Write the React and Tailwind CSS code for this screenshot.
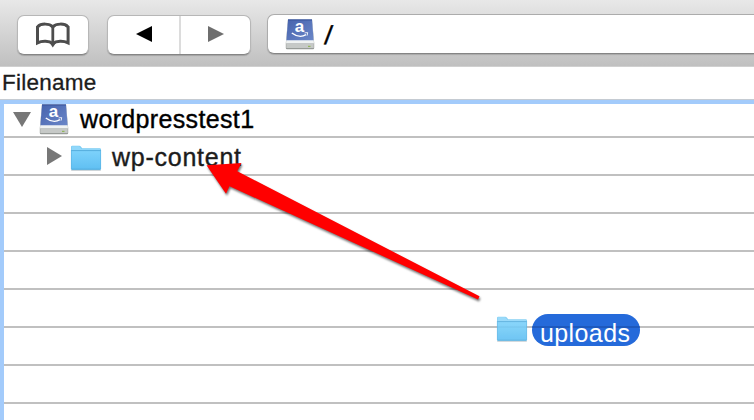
import React from "react";

function BookIcon() {
  return (
    <svg className="h-[26px] w-[36px]" viewBox="0 0 36 26" fill="none" stroke="#4d4d4d">
      <path
        strokeWidth="3"
        d="M17.8 4.9C14.5 1.3 6 1.1 2.5 4.9V20.8C7 18.5 14.2 18.4 17.8 21.7C21.4 18.4 28.6 18.5 33.1 20.8V4.9C29.6 1.1 21.1 1.3 17.8 4.9Z"
      />
      <path strokeWidth="2.8" d="M17.8 4.6V22" />
      <path fill="#4d4d4d" stroke="none" d="M14.6 20.7h6.4l-3.2 4.8z" />
    </svg>
  );
}

function DriveIcon({ id }) {
  return (
    <svg className="h-[31px] w-[30px] shrink-0 overflow-visible" viewBox="0 0 30 31">
      <defs>
        <linearGradient id={id} x1="0" y1="0" x2="1" y2="1">
          <stop offset="0" stopColor="#4562ad" />
          <stop offset="1" stopColor="#6b87c8" />
        </linearGradient>
      </defs>
      <path d="M3 .5H27L29.2 24V29Q29.2 30.3 28 30.3H2Q.8 30.3.8 29V24Z" fill="#979b98" />
      <path d="M3 .5H27L29 24.5H1Z" fill="#f0f3f3" />
      <path d="M3 .5H27L28.6 21.2H1.4Z" fill={`url(#${id})`} />
      <path d="M3 1H27" stroke="#38559c" strokeWidth="1" />
      <path d="M1.3 24.6H28.7V29H1.3Z" fill="#c6c9c7" />
      <path d="M23 27.4h2.5" stroke="#91b65b" strokeWidth="1.2" />
      <text
        x="14.4"
        y="12.9"
        textAnchor="middle"
        fill="#fff"
        className="font-['Liberation_Sans',sans-serif] text-[17px] leading-none font-bold"
      >
        a
      </text>
      <path d="M6.8 14Q14.5 19.8 21 15.7" fill="none" stroke="#fff" strokeWidth="1.4" />
      <path d="M19.6 13.9L22.7 13.6L22.1 16.6" fill="none" stroke="#fff" strokeOpacity=".85" strokeWidth="1" />
    </svg>
  );
}

function FolderIcon({ id }) {
  return (
    <svg className="h-[26px] w-[32px] shrink-0" viewBox="0 0 32 26">
      <defs>
        <linearGradient id={id} x1="0" y1="0" x2="0" y2="1">
          <stop offset="0" stopColor="#7dd2fb" />
          <stop offset="1" stopColor="#5fbff2" />
        </linearGradient>
      </defs>
      <path d="M1.2 25.1H30.8" stroke="#aeb9bf" strokeWidth="1" />
      <path d="M1 24V2Q1 .7 2.3 .7H9.3Q10.2 .7 10.8 1.5L12.2 3.2H29.7Q31 3.2 31 4.5V24Z" fill="#7acbf2" />
      <path d="M1.7 5.3V2Q1.7 1.3 2.5 1.3H9.2L11.6 3.9H30.2V5.3Z" fill="#90d7fa" />
      <path d="M1 5.6H31V23.5Q31 24.7 29.8 24.7H2.2Q1 24.7 1 23.5Z" fill={`url(#${id})`} />
      <path d="M1 5.6H31M1.5 24.2H30.5" stroke="#50aada" strokeWidth=".9" />
      <path d="M1.4 5V24M30.6 5V24" stroke="#5bb5e4" strokeWidth=".7" />
    </svg>
  );
}

export default function App() {
  return (
    <div className="relative flex h-[420px] w-[754px] flex-col overflow-hidden bg-white font-['Liberation_Sans',Arial,sans-serif] text-black">
      <header className="flex h-[67px] shrink-0 items-start border-b border-[#d0d0d0] bg-linear-to-b from-[#e8e8e8] to-[#c0c0c0]">
        <button className="mt-[15px] ml-[17px] flex h-10 w-[72px] items-center justify-center rounded-[7px] border border-[#b7b7b7] border-b-[#858585] bg-white shadow-[0_1px_1px_rgba(0,0,0,0.18)]">
          <BookIcon />
        </button>
        <div className="mt-[15px] ml-[18px] flex h-10 w-[144px] rounded-[7px] border border-[#b7b7b7] border-b-[#858585] bg-white shadow-[0_1px_1px_rgba(0,0,0,0.18)]">
          <button className="flex w-[73px] items-center justify-center border-r-2 border-[#dcdcdc]">
            <svg className="-mt-0.5 ml-px h-4 w-4" viewBox="0 0 16 16">
              <path d="M0 8L16 0V16Z" fill="#000" />
            </svg>
          </button>
          <button className="flex flex-1 items-center justify-center">
            <svg className="-mt-0.5 h-4 w-4" viewBox="0 0 16 16">
              <path d="M16 8L0 0V16Z" fill="#6e6e6e" />
            </svg>
          </button>
        </div>
        <div className="mt-[14px] ml-4 flex h-10 flex-1 items-center rounded-l-[7px] border border-r-0 border-[#acacac] border-b-[#858585] bg-white pl-[17px] shadow-[0_1px_1px_rgba(0,0,0,0.15)]">
          <DriveIcon id="path-drive" />
          <span className="mt-px ml-[10px] text-[26px] leading-[30px] [-webkit-text-stroke:0.5px_#000]">
            <span className="inline-block -skew-x-6">/</span>
          </span>
        </div>
      </header>

      <div className="flex h-8 shrink-0 items-center pl-0.5 text-[22.5px] leading-[30px] tracking-[0.24px] text-[#1c1c1c] [-webkit-text-stroke:0.3px_#1c1c1c]">
        Filename
      </div>

      <main className="flex flex-1 flex-col border-t border-[#c5cbd2]">
        <div className="flex flex-1 flex-col border-t-4 border-l-4 border-[#a3cbfb]">
          <div className="flex h-[34px] items-center border-b-2 border-[#c0c0c0] pl-[9px]">
            <svg className="-mt-0.5 h-[15px] w-[18px]" viewBox="0 0 18 15">
              <path d="M0 0H18L9 15Z" fill="#777" />
            </svg>
            <div className="-mt-0.5 ml-2 flex">
              <DriveIcon id="tree-drive" />
            </div>
            <span className="-mt-0.5 ml-[11px] text-[25px] leading-[30px] tracking-[0.35px] [-webkit-text-stroke:0.4px_#000]">
              wordpresstest1
            </span>
          </div>
          <div className="flex h-[38px] items-center border-b-2 border-[#c0c0c0] pl-[43px]">
            <svg className="h-[18px] w-[15px]" viewBox="0 0 15 18">
              <path d="M0 0L15 9L0 18Z" fill="#777" />
            </svg>
            <div className="mt-1 ml-2 flex">
              <FolderIcon id="content-folder" />
            </div>
            <span className="mt-0.5 ml-[10px] text-[25px] leading-[30px] tracking-[0.75px] text-[#1c1c1c] [-webkit-text-stroke:0.4px_#1c1c1c]">
              wp-content
            </span>
          </div>
          <div className="h-[38px] border-b-2 border-[#c0c0c0]" />
          <div className="h-[38px] border-b-2 border-[#c0c0c0]" />
          <div className="h-[38px] border-b-2 border-[#c0c0c0]" />
          <div className="h-[38px] border-b-2 border-[#c0c0c0]" />
          <div className="h-[38px] border-b-2 border-[#c0c0c0]" />
          <div className="h-[38px] border-b-2 border-[#c0c0c0]" />
        </div>
      </main>

      <div className="absolute top-[314px] left-[496px] flex h-8 items-center">
        <div className="-mt-0.5 flex opacity-90">
          <FolderIcon id="uploads-folder" />
        </div>
        <div className="relative ml-1 flex h-8 w-[108px] items-center overflow-hidden rounded-full bg-[#256ada] pl-2 text-[25px] leading-[30px] tracking-[0.4px] text-white">
          <div className="absolute top-3 left-0 h-0.5 w-full bg-[#1e59bd]" />
          <span className="relative mt-[5px]">uploads</span>
        </div>
      </div>

      <svg
        className="absolute top-[150px] left-[190px] h-[160px] w-[310px] drop-shadow-[1px_2px_1px_rgba(0,0,0,0.55)]"
        viewBox="0 0 310 160"
      >
        <path d="M16.5 15.3L51.5 13L47.3 21.3L289.5 146.3L288 149.5L39.5 36.2L36 43.8Z" fill="#f00" />
      </svg>
    </div>
  );
}
